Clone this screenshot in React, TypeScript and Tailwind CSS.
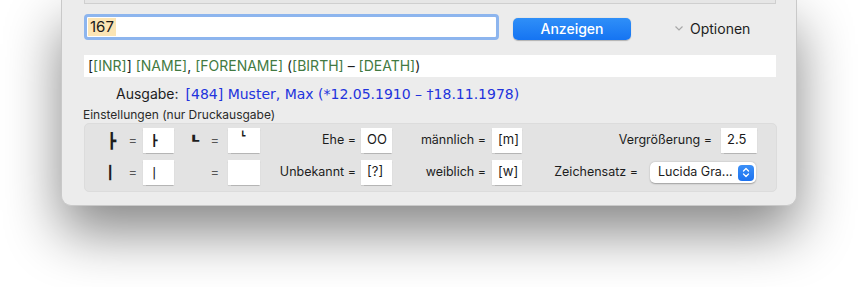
import React from "react";

const Box = ({ children, w = "w-[31px]", extra = "" }: { children?: React.ReactNode; w?: string; extra?: string }) => (
  <div className={`${w} h-[25px] bg-white shadow-[0_0.5px_1px_rgba(0,0,0,0.2)] pl-[6px] pt-[3px] text-[13px] leading-[16px] text-[#1a1a1a] ${extra}`}>
    {children}
  </div>
);

export default function App() {
  return (
    <div className="w-[858px] h-[287px] bg-white overflow-hidden font-['Inter',sans-serif] text-[#1d1d1d]">
      <div className="ml-[61px] w-[736px] h-[206px] bg-[#ececec] rounded-b-[10px] border-x border-b border-[#c9c9c9] shadow-[0_26px_55px_rgba(0,0,0,0.48)] flex flex-col">
        <div className="ml-[22px] w-[692px] h-[4px] bg-[#e6e6e6] border-x border-b border-[#cfcfcf]" />

        <div className="flex items-center mt-[10px] ml-[22px] h-[26px]">
          <div className="w-[415px] h-[26px] rounded-[4px] border-[3px] border-[#8db5ee] bg-white flex items-stretch pl-[1px] py-[1px]">
            <span className="bg-[#fce5b4] text-[15px] leading-[18px] text-[#1a1a1a] px-[2px] flex items-center">167</span>
          </div>
          <button className="ml-[14px] mt-[3px] w-[118px] h-[22px] rounded-[5px] bg-gradient-to-b from-[#2f8ff8] to-[#1574f2] text-white text-[14px] font-medium leading-[22px] text-center shadow-[0_0.5px_1px_rgba(0,0,0,0.25)]">
            Anzeigen
          </button>
          <div className="ml-[43px] mt-[2px] flex items-center">
            <svg width="10" height="7" viewBox="0 0 10 7" className="mr-[6px]">
              <path d="M1.5 1.5 L5 5 L8.5 1.5" fill="none" stroke="#a8a8a8" strokeWidth="1.2" />
            </svg>
            <span className="text-[14px] text-[#1d1d1d]">Optionen</span>
          </div>
        </div>

        <div className="mt-[15px] ml-[22px] w-[692px] h-[22px] bg-white flex items-center pl-[4px] text-[14px] leading-[18px]">
          <span>[</span>
          <span className="text-[#427a42]">[INR]</span>
          <span>]&nbsp;</span>
          <span className="text-[#427a42]">[NAME]</span>
          <span>,&nbsp;</span>
          <span className="text-[#427a42]">[FORENAME]</span>
          <span>&nbsp;(</span>
          <span className="text-[#427a42]">[BIRTH]</span>
          <span>&nbsp;–&nbsp;</span>
          <span className="text-[#427a42]">[DEATH]</span>
          <span>)</span>
        </div>

        <div className="mt-[8px] ml-[54px] flex items-center text-[14px] leading-[18px]">
          <span className="text-[#1d1d1d]">Ausgabe:</span>
          <span className="ml-[7px] text-[#2233dd] font-['DejaVu_Sans',sans-serif] text-[14px]">[484] Muster, Max (*12.05.1910 – †18.11.1978)</span>
        </div>

        <div className="mt-[4px] ml-[21px] text-[12px] leading-[15px] text-[#2a2a2a]">Einstellungen (nur Druckausgabe)</div>

        <div className="mt-[1px] ml-[22px] w-[693px] h-[69px] rounded-[5px] bg-[#e3e3e3] border border-[#dcdcdc] flex flex-col gap-[7px] pt-[4px] text-[12.5px] text-[#1d1d1d]">
          {/* row 1 */}
          <div className="flex items-center h-[25px]">
            <span className="w-[31px] text-right font-['DejaVu_Sans',sans-serif] text-[15px] leading-[18px] font-bold">┣</span>
            <span className="w-[21px] text-right text-[13px] text-[#555]">=</span>
            <div className="ml-[6px]"><Box extra="pl-[8px]"><span className="font-['DejaVu_Sans',sans-serif] text-[11px] leading-[13px]">┣</span></Box></div>
            <span className="w-[30px] self-start pt-[3px] pl-[14px]">
              <span className="inline-block origin-left scale-x-[1.8] font-['DejaVu_Sans',sans-serif] text-[10px] leading-[10px] font-bold">┗</span>
            </span>
            <span className="w-[15px] text-right text-[13px] text-[#555]">=</span>
            <div className="ml-[9px]"><Box w="w-[32px]" extra="pl-[12px] pt-[4px]"><span className="block font-['DejaVu_Sans',sans-serif] text-[9px] leading-[9px]">┗</span></Box></div>
            <span className="w-[96px] text-right">Ehe =</span>
            <div className="ml-[5px]"><Box extra="pl-[5px]">OO</Box></div>
            <span className="w-[94px] text-right">männlich =</span>
            <div className="ml-[6px]"><Box w="w-[30px]" extra="pl-[3px]">[m]</Box></div>
            <span className="w-[190px] text-right">Vergrößerung =</span>
            <div className="ml-[9px]"><Box w="w-[36px]" extra="pl-[4px]">2.5</Box></div>
          </div>
          {/* row 2 */}
          <div className="flex items-center h-[25px]">
            <span className="w-[31px] text-right font-['DejaVu_Sans',sans-serif] text-[13px] leading-[16px] font-bold pr-[2px]">┃</span>
            <span className="w-[21px] text-right text-[13px] text-[#555]">=</span>
            <div className="ml-[6px]"><Box extra="pl-[9px] pt-[4px]"><span className="font-['DejaVu_Sans',sans-serif] text-[13px] leading-[16px] text-[#1a1a1a]">|</span></Box></div>
            <span className="w-[30px]" />
            <span className="w-[15px] text-right text-[13px] text-[#555]">=</span>
            <div className="ml-[9px]"><Box w="w-[32px]" /></div>
            <span className="w-[96px] text-right">Unbekannt =</span>
            <div className="ml-[5px]"><Box extra="pl-[4px]">[?]</Box></div>
            <span className="w-[94px] text-right">weiblich =</span>
            <div className="ml-[6px]"><Box w="w-[30px]" extra="pl-[3px]">[w]</Box></div>
            <span className="w-[116px] text-right">Zeichensatz =</span>
            <div className="ml-[12px] w-[106px] h-[21px] rounded-[5px] bg-white shadow-[0_0.5px_1.5px_rgba(0,0,0,0.3)] flex items-center pl-[8px] pr-[2px]">
              <span className="flex-1 text-[12.5px]">Lucida Gra...</span>
              <div className="w-[16px] h-[16px] rounded-[4px] bg-gradient-to-b from-[#3a8ff7] to-[#1c72ef] flex items-center justify-center">
                <svg width="8" height="11" viewBox="0 0 8 11">
                  <path d="M1.5 4 L4 1.5 L6.5 4 M1.5 7 L4 9.5 L6.5 7" fill="none" stroke="white" strokeWidth="1.3" strokeLinecap="round" strokeLinejoin="round" />
                </svg>
              </div>
            </div>
          </div>
        </div>
      </div>
    </div>
  );
}
